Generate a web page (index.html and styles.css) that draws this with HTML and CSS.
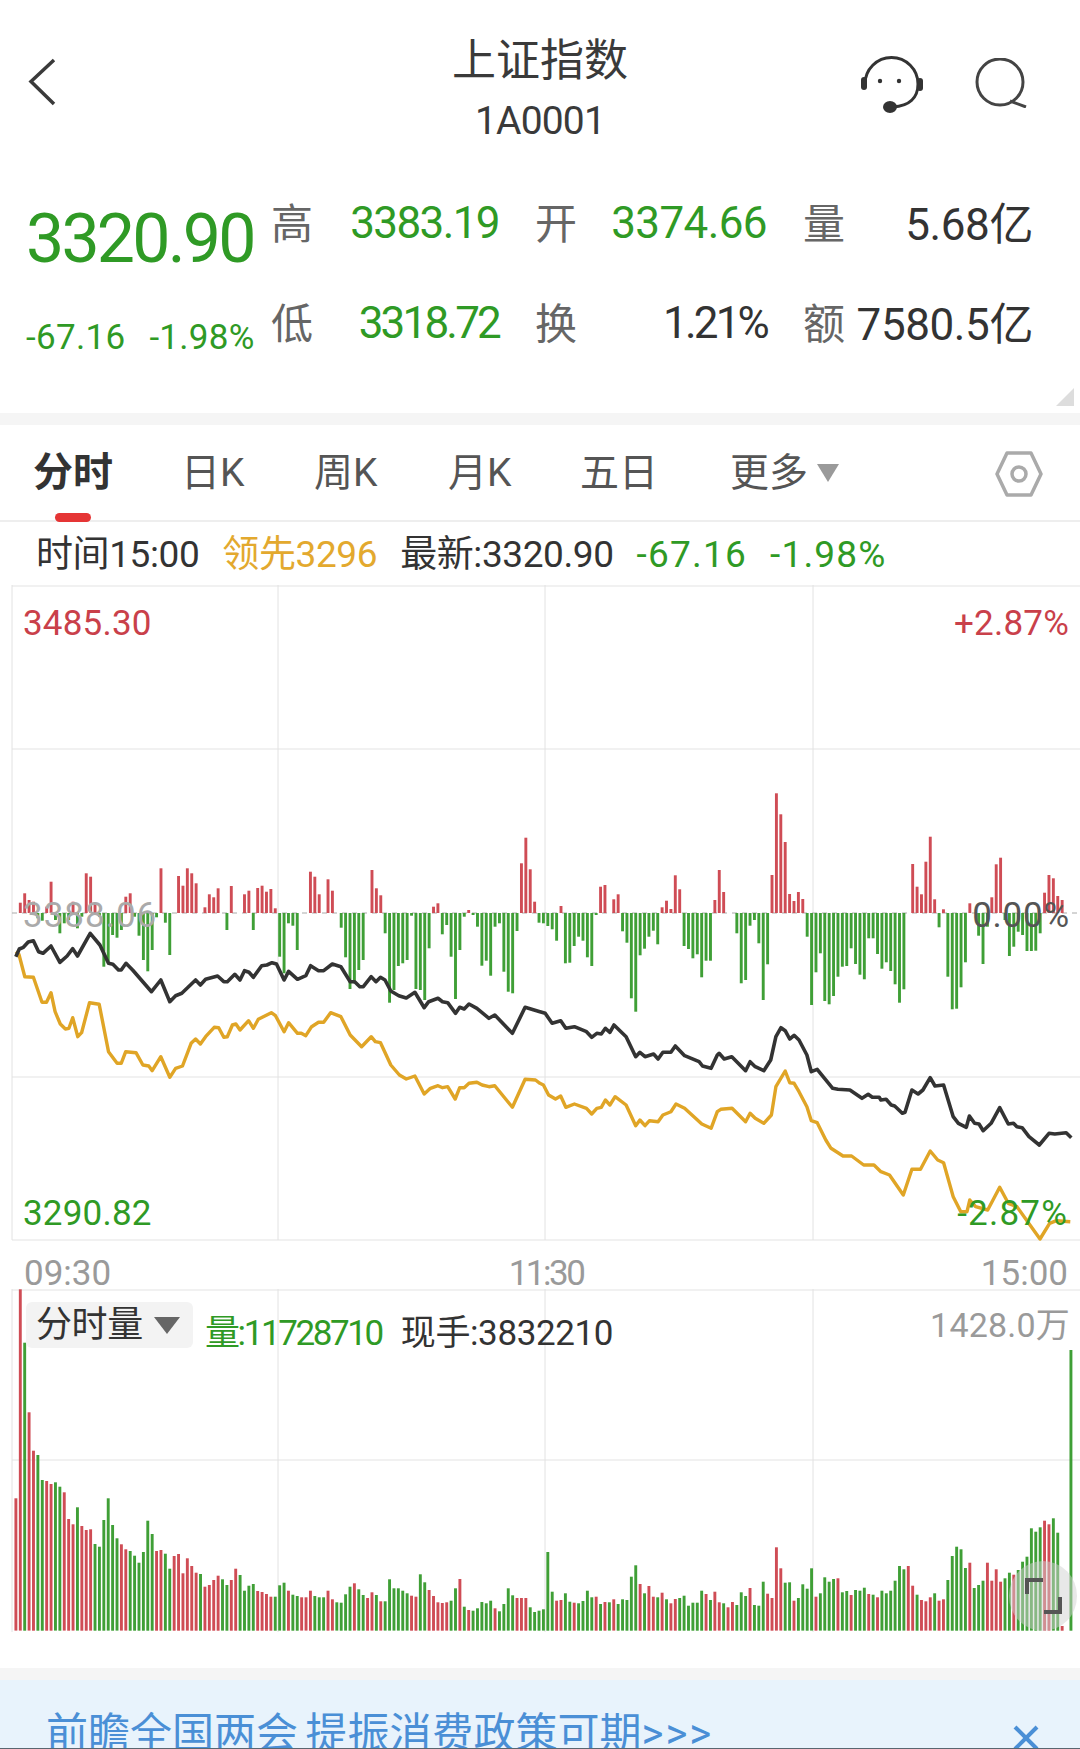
FILE: index.html
```html
<!DOCTYPE html>
<html lang="zh-CN">
  <head>
    <meta charset="UTF-8" />
    <meta name="viewport" content="width=device-width, initial-scale=1" />
    <title>上证指数</title>
    <link rel="stylesheet" href="styles.css">
  </head>
  <body>
    <header class="topbar">
      <div class="topbar-left">
        <svg class="icon-back" width="30" height="48" viewBox="0 0 30 48"><polyline points="26,2 3,23.5 26,46" /></svg>
      </div>
      <div class="topbar-title">
        <div class="name">上证指数</div>
        <div class="code">1A0001</div>
      </div>
      <div class="topbar-right">
        <svg class="icon-service" width="62" height="58" viewBox="0 0 62 58">
          <path d="M4 28 A26.500 26.500 0 0 1 57 28 C57 42 48 50 32 51" />
          <rect x="0" y="21" width="6" height="13" rx="3" />
          <rect x="56" y="22" width="6" height="13" rx="3" />
          <ellipse cx="29" cy="51" rx="7" ry="6" />
          <circle cx="19" cy="25" r="2.200" />
          <circle cx="38" cy="25" r="2.200" />
        </svg>
        <svg class="icon-search" width="52" height="50" viewBox="0 0 52 50">
          <circle cx="25" cy="24" r="23" />
          <line x1="35" y1="43" x2="51" y2="49" />
        </svg>
      </div>
    </header>

    <section class="quote">
      <div class="quote-main">
        <div class="price">3320.90</div>
        <div class="change"><span>-67.16</span><span>-1.98%</span></div>
      </div>
      <div class="stats">
        <div class="stat"><span class="stat-label">高</span><span class="stat-value down">3383.19</span></div>
        <div class="stat"><span class="stat-label">开</span><span class="stat-value down loose">3374.66</span></div>
        <div class="stat"><span class="stat-label">量</span><span class="stat-value amount">5.68亿</span></div>
        <div class="stat"><span class="stat-label">低</span><span class="stat-value down tight">3318.72</span></div>
        <div class="stat"><span class="stat-label">换</span><span class="stat-value tight">1.21%</span></div>
        <div class="stat"><span class="stat-label">额</span><span class="stat-value amount">7580.5亿</span></div>
      </div>
      <div class="corner"></div>
    </section>

    <div class="band"></div>

    <nav class="tabs">
      <span class="tab active">分时</span>
      <span class="tab tab-day">日K</span>
      <span class="tab tab-week">周K</span>
      <span class="tab tab-month">月K</span>
      <span class="tab tab-five">五日</span>
      <span class="tab tab-more">更多<svg width="22" height="18" viewBox="0 0 22 18"><polygon points="0,0 22,0 11,18" /></svg></span>
      <svg class="icon-setting" width="48" height="46" viewBox="0 0 48 46">
        <polygon points="12,2 36,2 46,23 36,44 12,44 2,23" />
        <circle cx="24" cy="23" r="7" />
      </svg>
    </nav>

    <div class="info-row">
      <span>时间15:00</span>
      <span class="lead">领先3296</span>
      <span>最新:3320.90</span>
      <span class="down wide">-67.16</span>
      <span class="down wide">-1.98%</span>
    </div>

    <section class="chart-main">
      <svg id="price-chart" width="1080" height="656" viewBox="0 0 1080 656"></svg>
      <span class="label label-tl up">3485.30</span>
      <span class="label label-tr up">+2.87%</span>
      <span class="label label-ml pre">3388.06</span>
      <span class="label label-mr">0.00%</span>
      <span class="label label-bl down">3290.82</span>
      <span class="label label-br down">-2.87%</span>
    </section>

    <div class="axis">
      <span>09:30</span>
      <span class="axis-mid">11:30</span>
      <span>15:00</span>
    </div>

    <section class="chart-volume">
      <svg id="volume-chart" width="1080" height="343" viewBox="0 0 1080 343"></svg>
      <div class="volume-legend">
        <span class="volume-select">分时量<svg width="26" height="17" viewBox="0 0 26 17"><polygon points="0,0 26,0 13,17" /></svg></span>
        <span class="down volume-total">量:11728710</span>
        <span class="volume-now">现手:3832210</span>
      </div>
      <span class="volume-max">1428.0万</span>
      <div class="fullscreen">
        <svg width="37" height="36" viewBox="0 0 37 36">
          <polyline points="2,16 2,2 18,2" />
          <polyline points="35,19 35,34 19,34" />
        </svg>
      </div>
    </section>

    <div class="band band-low"></div>

    <div class="banner">
      <span class="banner-text">前瞻全国两会 提振消费政策可期<span class="banner-arrows">&gt;&gt;&gt;</span></span>
      <svg class="banner-close" width="26" height="26" viewBox="0 0 26 26">
        <line x1="2" y1="2" x2="24" y2="24" />
        <line x1="24" y1="2" x2="2" y2="24" />
      </svg>
    </div>

    <script src="chart.js"></script>
  </body>
</html>
```

FILE: styles.css
```css
/* Base styles */
* {
  box-sizing: border-box;
}

body {
  width: 1080px;
  height: 1749px;
  margin: 0;
  overflow: hidden;
  background: #ffffff;
  color: #333333;
  font-family: Roboto, "Noto Sans CJK SC", sans-serif;
}

svg {
  display: block;
}

.down {
  color: #2f9a25;
}

.up {
  color: #c9404a;
}

/* Top bar */
.topbar {
  display: grid;
  grid-template-columns: 1fr auto 1fr;
  height: 172px;
}

.topbar-left {
  padding: 58px 0 0 28px;
}

.icon-back polyline {
  fill: none;
  stroke: #3a3a3a;
  stroke-width: 3.5;
}

.topbar-title {
  padding-top: 32px;
  text-align: center;
}

.name {
  font-size: 44px;
  line-height: 58px;
  color: #3a3a3a;
}

.code {
  margin-top: 8px;
  font-size: 39px;
  line-height: 46px;
  letter-spacing: -0.8px;
  color: #3a3a3a;
}

.topbar-right {
  display: flex;
  justify-content: flex-end;
  align-items: flex-start;
  gap: 52px;
  padding: 56px 53px 0 0;
}

.icon-service path {
  fill: none;
  stroke: #333333;
  stroke-width: 3;
}

.icon-service rect,
.icon-service ellipse,
.icon-service circle {
  fill: #333333;
}

.icon-search {
  margin-top: 2px;
}

.icon-search circle,
.icon-search line {
  fill: none;
  stroke: #444444;
  stroke-width: 3;
}

/* Quote block */
.quote {
  position: relative;
  display: flex;
  height: 241px;
  padding-left: 26px;
}

.quote-main {
  width: 246px;
}

.price {
  margin-top: 32px;
  font-size: 68px;
  line-height: 70px;
  letter-spacing: -2.8px;
  color: #2f9a25;
}

.change {
  display: flex;
  gap: 24px;
  margin-top: 44px;
  font-size: 35px;
  line-height: 40px;
  letter-spacing: 0.3px;
  color: #2f9a25;
  white-space: nowrap;
}

.stats {
  display: grid;
  grid-template-columns: 227px 231px 229px;
  grid-auto-rows: 100px;
  column-gap: 37px;
  margin-top: 26px;
}

.stat {
  display: flex;
  justify-content: space-between;
  align-items: center;
  height: 50px;
}

.stat-label {
  margin: -6px 0 0 -1px;
  font-size: 42px;
  color: #666666;
}

.stat-value {
  font-size: 44px;
  letter-spacing: -1.6px;
}

.stat-value.loose {
  letter-spacing: -0.6px;
}

.stat-value.tight {
  letter-spacing: -2.8px;
}

.stat-value.amount {
  margin-top: -4px;
  letter-spacing: -0.4px;
}

.corner {
  position: absolute;
  right: 6px;
  bottom: 7px;
  width: 18px;
  height: 18px;
  background: #dddddd;
  clip-path: polygon(100% 0, 100% 100%, 0 100%);
}

.band {
  height: 12px;
  background: #f5f5f5;
}

/* Tabs */
.tabs {
  position: relative;
  display: flex;
  height: 97px;
  border-bottom: 2px solid #eeeeee;
  font-size: 39px;
  color: #555555;
}

.tab {
  position: absolute;
  top: 23px;
  line-height: 50px;
  white-space: nowrap;
}

.tab.active {
  left: 33px;
  font-weight: 700;
  font-size: 40px;
  color: #333333;
}

.tab.active::after {
  content: "";
  position: absolute;
  left: 22px;
  top: 65px;
  width: 36px;
  height: 9px;
  border-radius: 5px;
  background: #e53535;
}

.tab-day {
  left: 181px;
}

.tab-week {
  left: 314px;
}

.tab-month {
  left: 448px;
}

.tab-five {
  left: 580px;
}

.tab-more {
  left: 730px;
  display: flex;
  align-items: center;
  gap: 9px;
}

.tab-more polygon {
  fill: #9a9a9a;
}

.icon-setting {
  position: absolute;
  left: 995px;
  top: 26px;
}

.icon-setting polygon,
.icon-setting circle {
  fill: none;
  stroke: #aaaaaa;
  stroke-width: 3.5;
  stroke-linejoin: round;
}

/* Info row */
.info-row {
  display: flex;
  gap: 23px;
  height: 63px;
  padding: 10px 0 0 36px;
  font-size: 37px;
  line-height: 46px;
  letter-spacing: -0.4px;
  white-space: nowrap;
}

.info-row .wide {
  letter-spacing: 1.200px;
}

.lead {
  color: #e3a92e;
}

/* Charts */
.chart-main,
.chart-volume {
  position: relative;
}

.chart-main {
  height: 656px;
}

.chart-volume {
  height: 343px;
}

.grid-line {
  stroke: #ececec;
  stroke-width: 1.500;
}

.grid-line.vertical {
  stroke: #e2e2e2;
  stroke-width: 1;
}

.zero-line {
  stroke: #aaaaaa;
  stroke-width: 1;
  stroke-dasharray: 5 5;
}

.bar-up {
  fill: #cf4c55;
}

.bar-down {
  fill: #3f9f36;
}

.line-price {
  fill: none;
  stroke: #333333;
  stroke-width: 3.600;
  stroke-linejoin: round;
}

.line-lead {
  fill: none;
  stroke: #e0a526;
  stroke-width: 3.400;
  stroke-linejoin: round;
}

.label {
  position: absolute;
  font-size: 35px;
  line-height: 40px;
  letter-spacing: 0.2px;
}

.label-tl {
  left: 23px;
  top: 19px;
}

.label-tr {
  right: 11px;
  top: 19px;
}

.label-ml {
  left: 23px;
  top: 311px;
  letter-spacing: 1px;
  color: #aaaaaa;
}

.label-mr {
  right: 10px;
  top: 311px;
  letter-spacing: 0.800px;
  color: #555555;
}

.label-bl {
  left: 23px;
  top: 609px;
}

.label-br {
  right: 12px;
  top: 609px;
  letter-spacing: 1.200px;
}

.axis {
  display: flex;
  justify-content: space-between;
  height: 48px;
  padding: 13px 12px 0 24px;
  font-size: 35px;
  line-height: 40px;
  color: #9a9a9a;
}

.axis-mid {
  letter-spacing: -2.500px;
}

/* Volume overlays */
.volume-legend {
  position: absolute;
  left: 26px;
  top: 13px;
  display: flex;
  align-items: flex-start;
  gap: 12px;
  font-size: 35px;
  line-height: 46px;
  letter-spacing: -0.4px;
  white-space: nowrap;
}

.volume-select {
  display: flex;
  align-items: center;
  gap: 11px;
  width: 167px;
  height: 46px;
  padding-left: 10px;
  border-radius: 6px;
  background: #f3f3f3;
  font-size: 36px;
}

.volume-select polygon {
  fill: #666666;
}

.volume-total {
  margin-top: 9px;
  letter-spacing: -2.400px;
}

.volume-now {
  margin: 9px 0 0 7px;
}

.volume-max {
  position: absolute;
  right: 10px;
  top: 16px;
  font-size: 34px;
  line-height: 40px;
  letter-spacing: 0.200px;
  color: #9a9a9a;
}

.fullscreen {
  position: absolute;
  left: 1009px;
  top: 272px;
  display: flex;
  align-items: center;
  justify-content: center;
  width: 68px;
  height: 70px;
  border-radius: 50%;
  background: rgba(210, 210, 210, 0.5);
}

.fullscreen polyline {
  fill: none;
  stroke: #555555;
  stroke-width: 4;
}

/* Bottom banner */
.band-low {
  margin-top: 36px;
}

.banner {
  position: relative;
  height: 69px;
  padding: 26px 0 0 46px;
  overflow: hidden;
  background: #e8f3fc;
  border-bottom: 1px solid #5a6670;
}

.banner-text {
  font-size: 42px;
  line-height: 56px;
  word-spacing: -3px;
  color: #4a8fd6;
  white-space: nowrap;
}

.banner-arrows {
  letter-spacing: 2px;
}

.banner-close {
  position: absolute;
  left: 1013px;
  top: 45px;
}

.banner-close line {
  stroke: #4a8fd6;
  stroke-width: 4;
}
```

FILE: chart.js
```js
// Minute data, traced by eye off 3x crops: y values are in thirds of a pixel.
// Volume: top of each bar, negative means a green bar.
const volumeTops = [
  655, 28, -188, 397, 512, -525, -600, 603, 612, -607, -620, 637, 717, 733, -682, 738, 750, 748, -792, -800,
  -720, -655, -735, -775, 793, 808, -813, -827, -848, -816, -722, -762, 813, 810, -821, -866, 828, 822, 880, 835,
  858, 878, -882, 920, 915, 900, 887, -898, -915, 900, 866, -885, -932, -917, -912, 933, 936, 942, 950, -950,
  -916, -908, 932, -944, -948, 952, 952, 932, -948, -952, -952, 932, 958, -967, -968, -943, -920, 910, -928, -945,
  954, 937, -945, 964, -964, -898, -925, -925, -932, -940, 947, 950, -883, -907, 930, 948, 967, 969, 967, -962,
  -925, 897, -980, 990, -992, -985, -966, -970, -962, 985, -994, -972, -925, -946, 954, 954, 954, -982, -996, -992,
  -988, -816, -935, 962, 960, -940, -965, 968, -970, -963, -932, -952, 950, -972, 966, -967, 958, -972, -958, -960,
  -890, -856, 912, -940, 918, 950, -952, 938, -958, 970, 957, -954, -947, -977, -968, -968, -932, 942, -960, 935,
  967, -970, 982, 966, -975, -937, -948, 924, -975, -977, -905, 941, 954, 802, 865, -908, -907, 962, -954, -913,
  -926, -865, 950, -940, -892, -905, -897, 895, -937, -933, 945, -930, -932, -923, 942, -944, 952, -932, -940, -932,
  -902, -858, -868, 858, 917, -944, 960, 964, 952, -940, 962, 958, -900, -828, -800, -808, -864, 848, -924, -915,
  -902, 848, 902, 868, 905, -895, -878, 884, -870, -845, -830, -745, -755, -742, 722, 733, -715, -758, 1038, 0,
  -210
];

// Buy/sell difference: far end of each bar, 429 is the zero line.
const diffEnds = [
  429, 398, 370, 390, 395, 445, 452, 410, 335, 450, 490, 460, 450, 395, 475, 440, 310, 320, 400, 440,
  590, 575, 495, 503, 480, 380, 370, 440, 497, 570, 604, 540, 442, 295, 458, 555, 429, 318, 347, 295,
  310, 340, 429, 412, 373, 382, 355, 429, 480, 348, 429, 429, 373, 362, 480, 354, 347, 365, 357, 415,
  560, 610, 460, 467, 540, 429, 429, 305, 320, 373, 429, 328, 362, 429, 473, 562, 657, 640, 600, 570,
  429, 300, 355, 376, 490, 698, 660, 588, 580, 570, 437, 657, 660, 690, 535, 410, 400, 493, 465, 560,
  687, 540, 440, 420, 435, 470, 587, 572, 617, 470, 460, 605, 665, 670, 483, 280, 203, 298, 395, 458,
  460, 468, 478, 512, 408, 580, 578, 528, 500, 512, 562, 588, 435, 350, 345, 429, 388, 373, 484, 518,
  685, 725, 556, 536, 500, 482, 523, 412, 392, 417, 316, 358, 528, 537, 565, 553, 622, 572, 572, 390,
  300, 366, 429, 429, 490, 640, 630, 467, 450, 520, 690, 583, 315, 70, 133, 216, 372, 393, 366, 387,
  500, 705, 607, 550, 693, 703, 678, 620, 590, 588, 535, 582, 614, 628, 505, 505, 552, 596, 577, 603,
  643, 698, 658, 429, 282, 350, 373, 275, 200, 388, 472, 418, 620, 718, 716, 652, 577, 400, 429, 497,
  582, 470, 382, 283, 263, 450, 558, 530, 485, 495, 543, 543, 542, 490, 368, 315, 325, 378, 390, 429,
  429
];

// Each piece: [x origin, y origin, points as x (2.904x) and y (3x)]
const priceLine = [
  [0, 770, [46,560, 56,537, 68,532, 82,516, 97,512, 112,545, 125,550, 148,528, 174,577, 195,558, 211,536, 225,558, 262,490, 290,525, 315,580, 328,583, 344,600, 352,600, 366,580, 385,600, 440,665, 467,630, 493,695, 510,677, 528,670, 568,630, 582,645, 597,628, 632,618, 650,635, 660,635, 682,613, 697,630, 710,602, 723,607, 736,622, 760,587, 775,585, 790,578, 803,582, 825,630, 838,604, 864,628, 888,617, 902,587, 925,602, 940,602, 965,582, 990,590, 1017,635, 1030,635, 1045,650, 1055,650, 1078,620, 1092,635, 1105,622, 1118,630, 1135,663, 1158,677, 1180,684, 1205,667, 1232,713, 1245,695, 1272,685, 1285,695, 1300,698, 1323,730, 1335,712, 1348,717, 1362,702, 1385,715, 1420,745, 1437,735, 1488,790, 1525,712, 1568,725]],
  [540, 1000, [0,35, 15,40, 35,70, 60,62, 75,85, 100,80, 135,95, 150,112, 165,100, 178,102, 190,85, 203,97, 215,75, 250,110, 278,170, 290,157, 305,170, 330,162, 343,177, 357,157, 380,157, 393,138, 420,167, 462,185, 472,198, 497,205, 515,165, 520,160, 535,177, 557,170, 597,212, 610,185, 625,200, 650,212, 670,180, 685,110, 700,83, 712,92, 725,117, 738,106, 752,120, 775,165, 788,215, 805,208, 822,230, 850,265, 865,268, 900,270, 935,295, 953,283, 965,292, 985,292, 990,300, 1005,298, 1020,315, 1030,318, 1052,340, 1060,337, 1080,270, 1098,282, 1112,270, 1133,233, 1147,258, 1172,255, 1200,350, 1215,370, 1238,382, 1247,348, 1262,370, 1275,372, 1287,392, 1310,370, 1335,323, 1360,372, 1375,370, 1385,380, 1400,383, 1420,410, 1450,435, 1478,400, 1495,402, 1528,398, 1543,413]]
];

const leadLine = [
  [0, 770, [46,545, 55,553, 72,620, 97,622, 122,697, 135,697, 148,668]],
  [0, 1000, [160,35, 175,72, 190,87, 200,85, 211,53, 226,110, 237,98, 260,8, 288,13, 315,155, 340,190, 352,190, 365,155, 395,158, 415,195, 432,198, 442,212, 467,170, 493,232, 510,205, 530,198, 555,130, 568,117, 582,132, 597,110, 622,82, 635,83, 650,112, 660,110, 675,75, 685,72, 697,90, 722,62, 736,85, 750,58, 788,38, 800,47, 825,95, 838,68, 864,100, 875,100, 888,107, 905,80, 925,67, 940,67, 960,38, 990,50, 1017,105, 1050,140, 1078,110, 1090,125, 1105,128, 1135,195, 1160,225, 1180,237, 1205,228, 1232,282, 1250,265, 1272,257, 1285,263, 1300,260, 1322,297, 1335,263, 1348,263, 1362,250, 1385,247, 1400,255, 1420,260, 1437,257, 1488,322, 1525,238, 1555,240, 1568,250]],
  [540, 1000, [10,255, 25,285, 45,297, 60,288, 75,322, 100,312, 135,325, 150,342, 165,325, 178,322, 190,300, 203,315, 218,290, 250,315, 278,377, 290,360, 305,377, 318,362, 343,365, 357,345, 380,335, 395,312, 420,325, 470,372, 497,385, 515,335, 525,328, 558,325, 597,365, 610,340, 625,355, 650,370, 672,345, 685,260, 712,213, 725,248, 738,250, 752,275, 775,320, 788,362, 805,368, 830,420, 845,445, 880,468, 905,468, 940,495, 970,495, 990,515, 1015,525, 1055,585, 1080,508, 1105,508, 1133,453, 1155,480, 1172,488, 1200,590, 1222,635, 1240,635, 1248,600, 1265,620, 1300,630, 1335,562, 1360,610, 1385,620, 1452,717, 1480,670, 1500,662, 1540,665]]
];

const PRICE_TOP = 585;
const VOLUME_TOP = 1289;
const BAR_WIDTH = 2.9;

function barX(i) {
  return 15.9 + i * 4.396 - BAR_WIDTH / 2;
}

function bar(i, y1, y2, cls) {
  return `<rect class="${cls}" x="${barX(i).toFixed(2)}" y="${y1.toFixed(1)}" width="${BAR_WIDTH}" height="${(y2 - y1).toFixed(1)}" />`;
}

function gridLines(bottom, hLines, frameRight) {
  let out = "";
  hLines.forEach((y) => {
    out += `<line class="grid-line" x1="12" y1="${y}" x2="${frameRight}" y2="${y}" />`;
  });
  [12, 278, 545, 813].forEach((x) => {
    out += `<line class="grid-line vertical" x1="${x}" y1="0" x2="${x}" y2="${bottom}" />`;
  });
  return out;
}

function linePoints(pieces, top) {
  return pieces
    .flatMap(([x0, y0, pts]) => {
      const out = [];
      for (let i = 0; i < pts.length; i += 2) {
        out.push(`${(x0 + pts[i] / 2.904).toFixed(1)},${(y0 + pts[i + 1] / 3 - top).toFixed(1)}`);
      }
      return out;
    })
    .join(" ");
}

function drawPriceChart() {
  const zero = 770 + 429 / 3 - PRICE_TOP;
  let svg = gridLines(655, [1, 164, 492, 655], 1080);
  svg += `<line class="zero-line" x1="12" y1="${zero}" x2="1080" y2="${zero}" />`;
  diffEnds.forEach((end, i) => {
    const y = 770 + end / 3 - PRICE_TOP;
    if (end < 429) svg += bar(i, y, zero, "bar-up");
    if (end > 429) svg += bar(i, zero, y, "bar-down");
  });
  svg += `<polyline class="line-lead" points="${linePoints(leadLine, PRICE_TOP)}" />`;
  svg += `<polyline class="line-price" points="${linePoints(priceLine, PRICE_TOP)}" />`;
  document.getElementById("price-chart").innerHTML = svg;
}

function drawVolumeChart() {
  const base = 1280 + 1052 / 3 - VOLUME_TOP;
  let svg = gridLines(343, [1, 171], 1080);
  volumeTops.forEach((top, i) => {
    if (top === 0) return;
    const y = 1280 + Math.abs(top) / 3 - VOLUME_TOP;
    svg += bar(i, y, base, top > 0 ? "bar-up" : "bar-down");
  });
  document.getElementById("volume-chart").innerHTML = svg;
}

drawPriceChart();
drawVolumeChart();
```
